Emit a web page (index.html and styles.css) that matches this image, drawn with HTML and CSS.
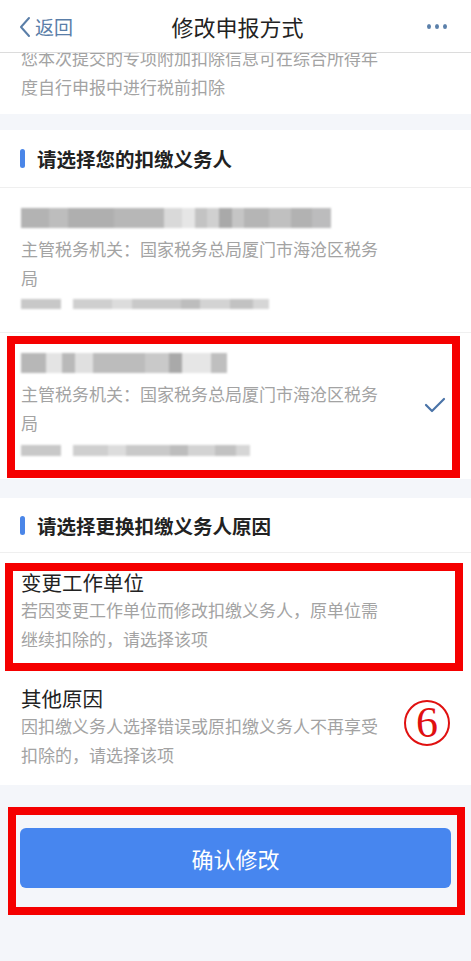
FILE: index.html
```html
<!DOCTYPE html>
<html lang="zh-CN">
<head>
<meta charset="utf-8">
<title>修改申报方式</title>
<link rel="stylesheet" href="styles.css">
</head>
<body>
<div class="page">
  <header class="nav">
    <div class="back">
      <svg class="chev" width="12" height="22" viewBox="0 0 12 22"><polyline points="10,2 2,11 10,20" fill="none" stroke="#5a7ea8" stroke-width="2" stroke-linecap="round" stroke-linejoin="round"/></svg>
      <span>返回</span>
    </div>
    <div class="title">修改申报方式</div>
    <div class="more"><i></i><i></i><i></i></div>
  </header>

  <section class="notice">
    <p>您本次提交的专项附加扣除信息可在综合所得年度自行申报中进行税前扣除</p>
  </section>

  <section class="card">
    <div class="sec-head"><span class="bar"></span>请选择您的扣缴义务人</div>
    <div class="agent">
      <div class="blur name n1"></div>
      <div class="desc">主管税务机关：国家税务总局厦门市海沧区税务局</div>
      <div class="blur line l1"><span class="a"></span><span class="b"></span></div>
    </div>
    <div class="agent selected">
      <div class="agent-body">
        <div class="blur name n2"></div>
        <div class="desc">主管税务机关：国家税务总局厦门市海沧区税务局</div>
        <div class="blur line l2"><span class="a"></span><span class="b"></span></div>
      </div>
      <svg class="check" width="22" height="16" viewBox="0 0 22 16"><polyline points="2,8 8,14 20,2" fill="none" stroke="#4a74a8" stroke-width="2.2" stroke-linecap="round" stroke-linejoin="round"/></svg>
      <div class="mark m1"></div>
    </div>
  </section>

  <section class="card">
    <div class="sec-head"><span class="bar"></span>请选择更换扣缴义务人原因</div>
    <div class="reason">
      <div class="r-title">变更工作单位</div>
      <div class="r-desc">若因变更工作单位而修改扣缴义务人，原单位需继续扣除的，请选择该项</div>
      <div class="mark m2"></div>
    </div>
    <div class="reason">
      <div class="r-title">其他原因</div>
      <div class="r-desc">因扣缴义务人选择错误或原扣缴义务人不再享受扣除的，请选择该项</div>
      <span class="step">6</span>
    </div>
  </section>

  <footer class="foot">
    <div class="btn-wrap">
      <button class="btn">确认修改</button>
      <div class="mark m3"></div>
    </div>
  </footer>
</div>
</body>
</html>
```

FILE: styles.css
```css
* { box-sizing: border-box; margin: 0; padding: 0; }
html, body { background: #f4f6fa; }
body {
  font-family: "Noto Sans CJK SC", "Noto Sans", sans-serif;
  width: 471px;
  height: 961px;
  overflow: hidden;
}
.page { display: flex; flex-direction: column; }

.nav {
  height: 53px;
  background: #fff;
  border-bottom: 1px solid #dcdcdc;
  display: flex;
  align-items: center;
  padding: 0 24px 0 19px;
  position: relative;
  z-index: 2;
}
.back {
  display: flex;
  align-items: center;
  gap: 4px;
  color: #5a7ea8;
  font-size: 19px;
  width: 120px;
}
.chev { margin-top: 1px; }
.title {
  flex: 1;
  text-align: center;
  font-size: 22px;
  color: #222;
  margin-right: 92px;
  margin-left: 1px;
}
.more { display: flex; gap: 4px; width: 20px; justify-content: flex-end; }
.more i { width: 5px; height: 5px; border-radius: 50%; background: #5b80aa; display: block; }

.notice {
  background: #fff;
  height: 61px;
  overflow: hidden;
  padding: 0 90px 0 21px;
}
.notice p {
  margin-top: -10px;
  font-size: 17px;
  line-height: 29px;
  color: #a3a3a3;
}

.card {
  background: #fff;
  margin-top: 16px;
}
.card + .card { margin-top: 19px; }
.sec-head {
  height: 58px;
  display: flex;
  align-items: center;
  padding-left: 20px;
  font-size: 19.5px;
  font-weight: bold;
  color: #222;
  border-bottom: 1px solid #efefef;
}
.card + .card .sec-head { height: 55px; }
.bar {
  width: 5px;
  height: 19px;
  border-radius: 3px;
  background: #4a86e8;
  margin-right: 12px;
}

.agent {
  position: relative;
  padding: 20px 21px 23px;
  border-bottom: 1px solid #f0f0f0;
}
.agent.selected { display: flex; align-items: center; border-bottom: none; }
.agent-body { flex: 1; }
.check { margin-right: 4px; }
.desc {
  font-size: 17px;
  line-height: 29px;
  color: #a3a3a3;
  margin-top: 6px;
  width: 360px;
}
.blur { filter: blur(1.3px); }
.name { height: 20px; }
.n1 {
  width: 310px;
  background: linear-gradient(90deg, #b3b3b3 0 9%, #bdbdbd 9% 15%, #afafaf 15% 30%, #b7b7b7 30% 46%, #d9d9d9 46% 52%, #e6e6e6 52% 56%, #c3c3c3 56% 60%, #d0d0d0 60% 64%, #a9a9a9 64% 68%, #c5c5c5 68% 72%, #b5b5b5 72% 80%, #c0c0c0 80% 87%, #b2b2b2 87% 94%, #bcbcbd 94% 100%);
}
.n2 {
  width: 206px;
  background: linear-gradient(90deg, #b7b7b7 0 12%, #e4e4e4 12% 20%, #b9b9b9 20% 26%, #e0e0e0 26% 35%, #bcbcbc 35% 60%, #c9c9c9 60% 72%, #a9a9a9 72% 78%, #e6e6e6 78% 92%, #bfbfbf 92% 100%);
}
.line { display: flex; height: 10px; margin-top: 7px; gap: 12px; }
.line .a { width: 40px; background: #c8c8c8; }
.line .b { background: linear-gradient(90deg, #cfcfcf 0 20%, #dcdcdc 20% 30%, #c9c9c9 30% 55%, #bdbdbd 55% 65%, #d3d3d3 65% 80%, #c2c2c2 80% 92%, #d6d6d6 92% 100%); }
.l1 .b { width: 196px; }
.l2 .b { width: 177px; }
.l2 { margin-top: 8px; height: 11px; }

.reason {
  position: relative;
  padding: 15px 21px 16px;
}
.r-title {
  font-size: 20.5px;
  line-height: 28px;
  color: #222;
}
.r-desc {
  font-size: 17px;
  line-height: 28.5px;
  color: #a3a3a3;
  width: 362px;
}
.step {
  position: absolute;
  right: 21px;
  top: 31px;
  width: 46px;
  height: 46px;
  border: 2.5px solid #e01010;
  border-radius: 50%;
  color: #e01010;
  font-family: "Liberation Serif", serif;
  font-size: 44px;
  line-height: 41px;
  text-align: center;
}

.foot {
  padding: 43px 20px 0;
}
.btn-wrap { position: relative; }
.btn {
  width: 100%;
  height: 60px;
  border: none;
  border-radius: 6px;
  background: #4786ef;
  color: #fff;
  font-family: "Noto Sans CJK SC", sans-serif;
  font-size: 22px;
}

.mark {
  position: absolute;
  border: 8px solid #f50000;
  pointer-events: none;
}
.m1 { top: 3px; bottom: 1px; left: 7px; right: 11px; }
.m2 { top: 10px; bottom: -2px; left: 5px; right: 8px; }
.m3 { top: -21px; bottom: -27px; left: -12px; right: -14px; }
```
